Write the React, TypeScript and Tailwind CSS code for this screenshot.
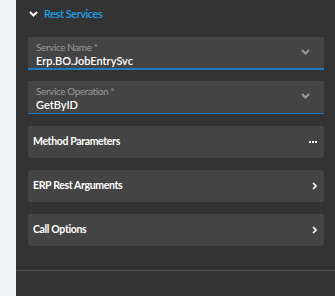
import React from "react";

function ChevronDown({ className }: { className?: string }) {
  return (
    <svg className={className} width="9" height="6" viewBox="0 0 9 6" fill="none">
      <path d="M1 1l3.5 3.5L8 1" stroke="currentColor" strokeWidth="2" />
    </svg>
  );
}

function ChevronRight() {
  return (
    <svg width="5" height="8" viewBox="0 0 5 8" fill="none" className="text-white">
      <path d="M1 1l3 3-3 3" stroke="currentColor" strokeWidth="1.6" />
    </svg>
  );
}

function Dots() {
  return (
    <div className="flex gap-px">
      <span className="h-[2px] w-[2px] bg-white" />
      <span className="h-[2px] w-[2px] bg-white" />
      <span className="h-[2px] w-[2px] bg-white" />
    </div>
  );
}

function Field({ label, value, thick }: { label: string; value: string; thick?: boolean }) {
  return (
    <div
      className={`flex h-[33px] items-start justify-between bg-[#444444] pl-2 pr-[14px] pt-[5px] ${
        thick ? "border-b-2 border-[#1e7bbf]" : "border-b border-[#1e7bbf]"
      }`}
    >
      <div className="flex flex-col">
        <span className="text-[10px] leading-[11px] tracking-[-0.4px] text-[#9a9a9a]">{label}</span>
        <span className="mt-[2px] text-[11px] leading-[12px] font-semibold text-white">{value}</span>
      </div>
      <ChevronDown className="mt-[7px] text-[#9a9a9a]" />
    </div>
  );
}

function Card({ title, icon }: { title: string; icon: React.ReactNode }) {
  return (
    <div className="flex h-8 items-center justify-between rounded-[3px] bg-[#444444] pl-[5px] pr-[7px]">
      <span className="text-[10.5px] font-bold tracking-[-0.35px] text-white">{title}</span>
      {icon}
    </div>
  );
}

export default function App() {
  return (
    <div className="flex h-[296px] w-[335px] bg-[#eef2f5] font-['Lato',sans-serif]">
      <div className="ml-4 flex flex-1 flex-col bg-[#333333]">
        <div className="flex h-[28px] items-center pl-[13px]">
          <ChevronDown className="text-white" />
          <span className="ml-[6px] text-[11px] font-semibold tracking-[-0.45px] text-[#1fa0e6]">
            Rest Services
          </span>
        </div>
        <div className="flex flex-col pl-3 pr-[11px] pt-[9px]">
          <Field label="Service Name *" value="Erp.BO.JobEntrySvc" thick />
          <div className="mt-[11px]">
            <Field label="Service Operation *" value="GetByID" />
          </div>
          <div className="mt-3 flex flex-col gap-3">
            <Card title="Method Parameters" icon={<Dots />} />
            <Card title="ERP Rest Arguments" icon={<ChevronRight />} />
            <Card title="Call Options" icon={<ChevronRight />} />
          </div>
        </div>
        <div className="mt-[24px] h-px bg-[#555555]" />
      </div>
    </div>
  );
}
